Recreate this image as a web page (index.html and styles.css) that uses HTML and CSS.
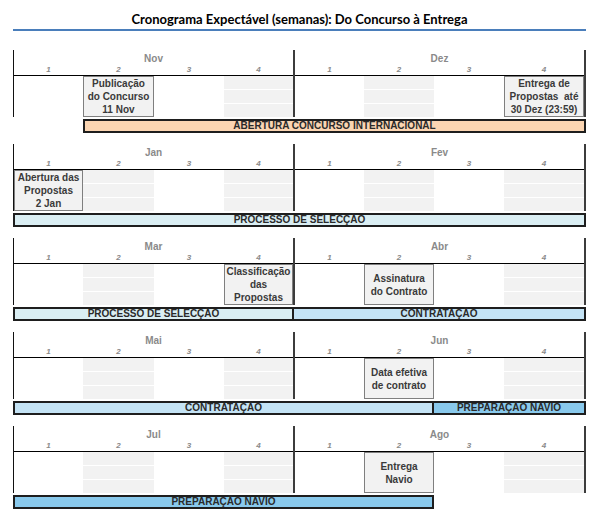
FILE: index.html
```html
<!DOCTYPE html>
<html lang="pt">
<head>
<meta charset="utf-8">
<title>Cronograma</title>
<link rel="stylesheet" href="styles.css">
</head>
<body>
<div class="page">
  <h1 class="title">Cronograma Expectável (semanas): Do Concurso à Entrega</h1>

  <section class="block">
    <div class="months">
      <div class="month m-left">
        <div class="mname">Nov</div>
        <div class="weeks"><span>1</span><span>2</span><span>3</span><span>4</span></div>
        <div class="cells"><div></div><div class="ev">Publicação<br>do Concurso<br>11 Nov</div><div></div><div class="shade"></div></div>
      </div>
      <div class="month m-right">
        <div class="mname">Dez</div>
        <div class="weeks"><span>1</span><span>2</span><span>3</span><span>4</span></div>
        <div class="cells"><div></div><div class="shade"></div><div></div><div class="ev">Entrega de<br>Propostas&nbsp; até<br>30 Dez (23:59)</div></div>
      </div>
    </div>
    <div class="bars"><div class="bar c-peach s-2-9">ABERTURA CONCURSO INTERNACIONAL</div></div>
  </section>

  <section class="block">
    <div class="months">
      <div class="month m-left">
        <div class="mname">Jan</div>
        <div class="weeks"><span>1</span><span>2</span><span>3</span><span>4</span></div>
        <div class="cells"><div class="ev">Abertura das<br>Propostas<br>2 Jan</div><div class="shade"></div><div></div><div class="shade"></div></div>
      </div>
      <div class="month m-right">
        <div class="mname">Fev</div>
        <div class="weeks"><span>1</span><span>2</span><span>3</span><span>4</span></div>
        <div class="cells"><div></div><div class="shade"></div><div></div><div class="shade"></div></div>
      </div>
    </div>
    <div class="bars"><div class="bar c-teal s-1-9">PROCESSO DE SELECÇÃO</div></div>
  </section>

  <section class="block">
    <div class="months">
      <div class="month m-left">
        <div class="mname">Mar</div>
        <div class="weeks"><span>1</span><span>2</span><span>3</span><span>4</span></div>
        <div class="cells"><div></div><div class="shade"></div><div></div><div class="ev">Classificação<br>das<br>Propostas</div></div>
      </div>
      <div class="month m-right">
        <div class="mname">Abr</div>
        <div class="weeks"><span>1</span><span>2</span><span>3</span><span>4</span></div>
        <div class="cells"><div></div><div class="ev">Assinatura<br>do Contrato</div><div></div><div class="shade"></div></div>
      </div>
    </div>
    <div class="bars"><div class="bar c-teal s-1-5">PROCESSO DE SELECÇÃO</div><div class="bar c-light s-5-9 next">CONTRATAÇÃO</div></div>
  </section>

  <section class="block">
    <div class="months">
      <div class="month m-left">
        <div class="mname">Mai</div>
        <div class="weeks"><span>1</span><span>2</span><span>3</span><span>4</span></div>
        <div class="cells"><div></div><div class="shade"></div><div></div><div class="shade"></div></div>
      </div>
      <div class="month m-right">
        <div class="mname">Jun</div>
        <div class="weeks"><span>1</span><span>2</span><span>3</span><span>4</span></div>
        <div class="cells"><div></div><div class="ev">Data efetiva<br>de contrato</div><div></div><div class="shade"></div></div>
      </div>
    </div>
    <div class="bars"><div class="bar c-light s-1-7">CONTRATAÇÃO</div><div class="bar c-blue s-7-9 next">PREPARAÇÃO NAVIO</div></div>
  </section>

  <section class="block">
    <div class="months">
      <div class="month m-left">
        <div class="mname">Jul</div>
        <div class="weeks"><span>1</span><span>2</span><span>3</span><span>4</span></div>
        <div class="cells"><div></div><div class="shade"></div><div></div><div class="shade"></div></div>
      </div>
      <div class="month m-right">
        <div class="mname">Ago</div>
        <div class="weeks"><span>1</span><span>2</span><span>3</span><span>4</span></div>
        <div class="cells"><div></div><div class="ev">Entrega<br>Navio</div><div></div><div class="shade"></div></div>
      </div>
    </div>
    <div class="bars"><div class="bar c-blue s-1-7">PREPARAÇÃO NAVIO</div></div>
  </section>
</div>
</body>
</html>
```

FILE: styles.css
```css
* { box-sizing: border-box; }
html, body { margin: 0; padding: 0; background: #fff; }
body { font-family: "Liberation Sans", Arial, sans-serif; color: #333; }

.page { width: 600px; padding: 0 0 0 13px; }

.title {
  width: 573px;
  margin: 0;
  padding-top: 10px;
  height: 31px;
  line-height: 18px;
  font-family: Lato, "Open Sans", sans-serif;
  font-size: 13px;
  font-weight: 700;
  color: #000;
  text-align: center;
  border-bottom: 2px solid #4a7ebb;
}

.block { width: 573px; margin-top: 19px; }
.block + .block { margin-top: 11px; }

.months { display: grid; grid-template-columns: 280px 293px; }
.month { display: flex; flex-direction: column; }
.m-left { border-left: 1px solid #111; }
.m-right { border-left: 2px solid #3c3c3c; border-right: 2px solid #3c3c3c; }

.mname {
  padding-top: 3px;
  height: 14px;
  line-height: 11px;
  font-size: 10px;
  font-weight: 700;
  color: #8a8a8a;
  text-align: center;
}
.weeks {
  display: grid;
  height: 12px;
  line-height: 11px;
  border-bottom: 1px solid #000;
  font-size: 8px;
  font-weight: 700;
  font-style: italic;
  color: #8a8a8a;
  text-align: center;
}
.cells { display: grid; height: 41px; }
.m-left .weeks, .m-left .cells { grid-template-columns: 69px 71px 70px 69px; }
.m-right .weeks, .m-right .cells { grid-template-columns: 69px 70px 70px 80px; }

.shade {
  background:
    linear-gradient(#fff, #fff) 0 13px / 100% 1px no-repeat,
    linear-gradient(#fff, #fff) 0 27px / 100% 1px no-repeat,
    #f2f2f2;
}
.ev {
  display: flex;
  flex-direction: column;
  justify-content: center;
  align-items: center;
  text-align: center;
  background: #f2f2f2;
  border: 1px solid #7f7f7f;
  font-size: 10px;
  font-weight: 700;
  line-height: 13px;
  color: #3a3a3a;
}

.bars {
  display: grid;
  grid-template-columns: 70px 71px 70px 70px 70px 70px 70px 82px;
  margin-top: 2px;
}
.bar {
  height: 14px;
  border: 2px solid #1e1e1e;
  font-size: 10px;
  font-weight: 700;
  line-height: 9px;
  text-align: center;
  color: #2a2a2a;
  white-space: nowrap;
}
.bar.next { border-left: 0; }
.s-1-9 { grid-column: 1 / 9; }
.s-2-9 { grid-column: 2 / 9; }
.s-1-5 { grid-column: 1 / 5; }
.s-5-9 { grid-column: 5 / 9; }
.s-1-7 { grid-column: 1 / 7; }
.s-7-9 { grid-column: 7 / 9; }

.c-peach { background: #fbd5b2; }
.c-teal { background: #daeef3; }
.c-light { background: #c4e3f5; }
.c-blue { background: #89c9ec; }
```
